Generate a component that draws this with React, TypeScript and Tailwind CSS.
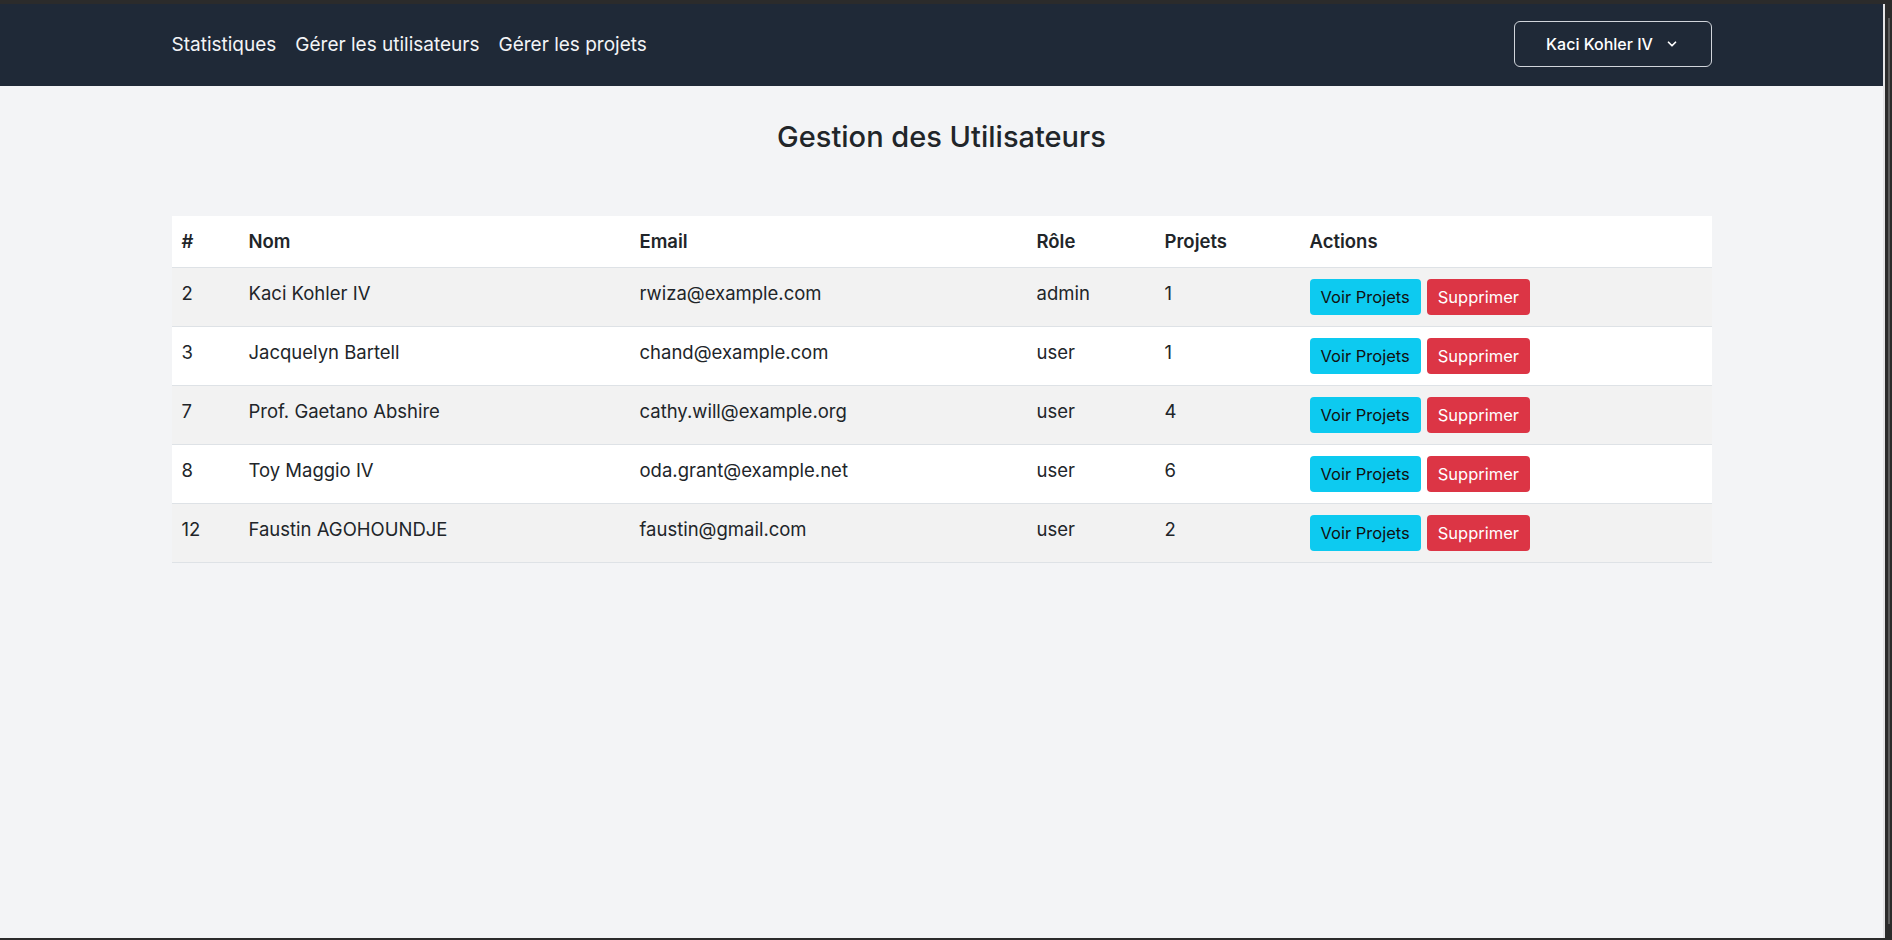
import { ChevronDown } from 'lucide-react'

type User = {
  id: number
  name: string
  email: string
  role: string
  projects: number
}

const users: User[] = [
  { id: 2, name: 'Kaci Kohler IV', email: 'rwiza@example.com', role: 'admin', projects: 1 },
  { id: 3, name: 'Jacquelyn Bartell', email: 'chand@example.com', role: 'user', projects: 1 },
  { id: 7, name: 'Prof. Gaetano Abshire', email: 'cathy.will@example.org', role: 'user', projects: 4 },
  { id: 8, name: 'Toy Maggio IV', email: 'oda.grant@example.net', role: 'user', projects: 6 },
  { id: 12, name: 'Faustin AGOHOUNDJE', email: 'faustin@gmail.com', role: 'user', projects: 2 },
]

export default function App() {
  return (
    <div className="w-[1892px] h-[940px] bg-[#2b2b2b] pt-1 pb-[2px] flex font-['Inter',sans-serif] text-[#212529]">
      <div className="flex-1 flex flex-col bg-[#f3f4f6] border-r-2 border-[#e4e4e6]">
        {/* ── Navbar ───────────────────────────────────────────── */}
        <nav className="h-[82px] bg-[#1f2937] shrink-0">
          <div className="w-[1540px] mx-auto h-full flex items-center justify-between">
            <div className="flex items-center gap-[19px] text-[19px] text-[#f3f4f6]">
              <a href="#">Statistiques</a>
              <a href="#">Gérer les utilisateurs</a>
              <a href="#">Gérer les projets</a>
            </div>
            <button
              type="button"
              className="w-[198px] h-[46px] mt-[-2px] rounded-md border border-[#d1d5db] text-white text-[16px] font-medium flex items-center justify-center gap-3"
            >
              Kaci Kohler IV
              <ChevronDown size={14} strokeWidth={3} />
            </button>
          </div>
        </nav>

        {/* ── Content ──────────────────────────────────────────── */}
        <main className="w-[1540px] mx-auto pt-[33px]">
          <h1 className="text-center text-[29px] font-medium text-[#212529] leading-[36px]">
            Gestion des Utilisateurs
          </h1>

          <table className="w-full mt-[61px] text-[18.5px] text-left border-collapse">
            <thead>
              <tr className="bg-white border-b border-[#dee2e6]">
                <th className="w-[67px] pl-[10px] pt-[11px] pb-[12px] font-semibold leading-[28px]">#</th>
                <th className="w-[391px] pl-[10px] pt-[11px] pb-[12px] font-semibold leading-[28px]">Nom</th>
                <th className="w-[397px] pl-[10px] pt-[11px] pb-[12px] font-semibold leading-[28px]">Email</th>
                <th className="w-[128px] pl-[10px] pt-[11px] pb-[12px] font-semibold leading-[28px]">Rôle</th>
                <th className="w-[145px] pl-[10px] pt-[11px] pb-[12px] font-semibold leading-[28px]">Projets</th>
                <th className="pl-[10px] pt-[11px] pb-[12px] font-semibold leading-[28px]">Actions</th>
              </tr>
            </thead>
            <tbody>
              {users.map((u, i) => (
                <tr
                  key={u.id}
                  className={`border-b border-[#dee2e6] ${i % 2 === 0 ? 'bg-[#f2f2f2]' : 'bg-white'}`}
                >
                  <td className="pl-[10px] py-[11px] align-top leading-[28px]">{u.id}</td>
                  <td className="pl-[10px] py-[11px] align-top leading-[28px]">{u.name}</td>
                  <td className="pl-[10px] py-[11px] align-top leading-[28px]">{u.email}</td>
                  <td className="pl-[10px] py-[11px] align-top leading-[28px]">{u.role}</td>
                  <td className="pl-[10px] py-[11px] align-top leading-[28px]">{u.projects}</td>
                  <td className="pl-[10px] py-[11px] align-top">
                    <div className="flex gap-[6px]">
                      <button
                        type="button"
                        className="h-[36px] px-[11px] rounded-[4px] bg-[#0dcaf0] text-[#111] text-[16.5px]"
                      >
                        Voir Projets
                      </button>
                      <button
                        type="button"
                        className="h-[36px] px-[11px] rounded-[4px] bg-[#dc3545] text-white text-[16.5px]"
                      >
                        Supprimer
                      </button>
                    </div>
                  </td>
                </tr>
              ))}
            </tbody>
          </table>
        </main>
      </div>

      {/* Window scrollbar */}
      <div className="w-[7px] bg-[#2b2b2b] flex justify-center pt-[14px] pb-[14px]">
        <div className="w-[2px] h-full bg-[#5a5a5a]" />
      </div>
    </div>
  )
}
